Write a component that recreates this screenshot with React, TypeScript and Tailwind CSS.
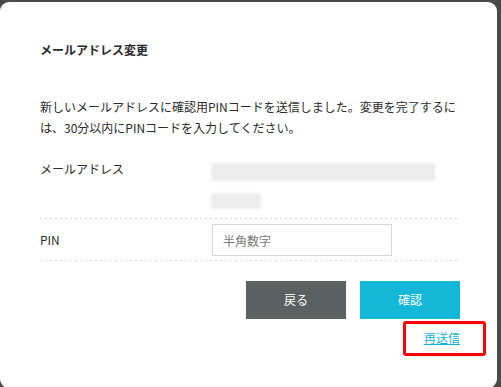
export default function App() {
    return (
        <div className="relative h-[387px] w-[501px] overflow-hidden bg-[#4a4a4a] pt-[2px] pr-[4px] text-[12px] text-[#2b2b2b] [font-family:'Noto_Sans_CJK_JP','Noto_Sans',sans-serif]">
            <div className="h-[386px] w-[497px] rounded-[9px] bg-white pl-[40px] pt-[38px]">
                <div className="w-[420px]">
                    <h2 className="text-[12px] font-bold leading-[20px]">メールアドレス変更</h2>
                    <p className="mt-[36px] leading-[21px]">
                        新しいメールアドレスに確認用PINコードを送信しました。変更を完了するには、30分以内にPINコードを入力してください。
                    </p>

                    <div className="mt-[22px] flex pb-[9px]">
                        <div className="w-[171px] leading-[18px]">メールアドレス</div>
                        <div className="pt-[3px]">
                            <div className="h-[18px] w-[224px] rounded-[2px] bg-[#ececec] blur-[1.5px]" />
                            <div className="mt-[12px] h-[16px] w-[50px] rounded-[2px] bg-[#ededed] blur-[1.5px]" />
                        </div>
                    </div>

                    <div className="h-px w-[418px] bg-[repeating-linear-gradient(to_right,#d2d2d2_0_2px,transparent_2px_5px)]" />
                    <div className="flex h-[41px] items-center pb-[4px] pt-[5px]">
                        <div className="w-[172px] leading-[18px]">PIN</div>
                        <input
                            className="h-[32px] w-[180px] border border-[#d6d6d6] px-[10px] text-[12px] text-[#333] outline-none placeholder:text-[#777]"
                            placeholder="半角数字"
                        />
                    </div>
                    <div className="h-px w-[418px] bg-[repeating-linear-gradient(to_right,#d2d2d2_0_2px,transparent_2px_5px)]" />

                    <div className="mt-[20px] flex justify-end gap-[14px]">
                        <button className="h-[38px] w-[100px] bg-[#5b6161] text-[12px] text-white">戻る</button>
                        <button className="h-[38px] w-[100px] bg-[#13b8d8] text-[12px] text-white">確認</button>
                    </div>

                    <div className="mt-[10px] flex justify-end">
                        <a href="#" className="leading-[18px] text-[#16b1d6] underline">再送信</a>
                    </div>
                </div>
            </div>
            {/* annotation box around the resend link */}
            <div className="absolute left-[403px] top-[321px] h-[35px] w-[83px] rounded-[3px] border-[3px] border-[#ff0000]" />
        </div>
    );
}
